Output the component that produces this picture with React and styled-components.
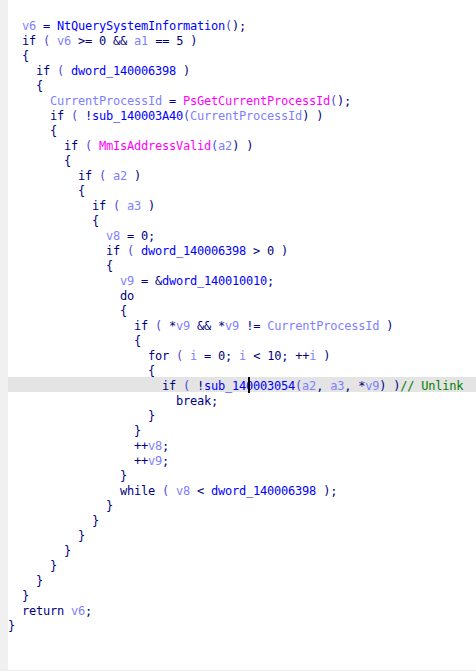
import React from 'react'
import styled, { createGlobalStyle } from 'styled-components'

const CHAR = 7

const LOCALS = new Set(['v6', 'v8', 'v9', 'a1', 'a2', 'a3', 'i', 'CurrentProcessId'])
const IMPORTS = new Set(['PsGetCurrentProcessId', 'MmIsAddressValid'])

const source = [
  '  v6 = NtQuerySystemInformation();',
  '  if ( v6 >= 0 && a1 == 5 )',
  '  {',
  '    if ( dword_140006398 )',
  '    {',
  '      CurrentProcessId = PsGetCurrentProcessId();',
  '      if ( !sub_140003A40(CurrentProcessId) )',
  '      {',
  '        if ( MmIsAddressValid(a2) )',
  '        {',
  '          if ( a2 )',
  '          {',
  '            if ( a3 )',
  '            {',
  '              v8 = 0;',
  '              if ( dword_140006398 > 0 )',
  '              {',
  '                v9 = &dword_140010010;',
  '                do',
  '                {',
  '                  if ( *v9 && *v9 != CurrentProcessId )',
  '                  {',
  '                    for ( i = 0; i < 10; ++i )',
  '                    {',
  '                      if ( !sub_140003054(a2, a3, *v9) )// Unlink',
  '                        break;',
  '                    }',
  '                  }',
  '                  ++v8;',
  '                  ++v9;',
  '                }',
  '                while ( v8 < dword_140006398 );',
  '              }',
  '            }',
  '          }',
  '        }',
  '      }',
  '    }',
  '  }',
  '  return v6;',
  '}',
]

const ACTIVE = 24
const CARET_COL = 34

function tokenize(text) {
  const out = []
  const cut = text.indexOf('//')
  const code = cut >= 0 ? text.slice(0, cut) : text
  code.split(/([A-Za-z_][A-Za-z0-9_]*)/).forEach((p) => {
    if (!p) return
    if (LOCALS.has(p)) out.push({ kind: 'local', text: p })
    else if (IMPORTS.has(p)) out.push({ kind: 'import', text: p })
    else if (/^(dword_|sub_|Nt)/.test(p)) out.push({ kind: 'name', text: p })
    else if (/^[A-Za-z_]/.test(p)) out.push({ kind: 'plain', text: p })
    else {
      // '(' renders in a lighter tone than the rest of the punctuation
      p.split(/(\()/).forEach((q) => {
        if (q) out.push({ kind: q === '(' ? 'paren' : 'plain', text: q })
      })
    }
  })
  if (cut >= 0) out.push({ kind: 'comment', text: text.slice(cut) })
  return out
}

const GlobalStyle = createGlobalStyle`
  html, body {
    margin: 0;
    padding: 0;
    background: #ffffff;
  }
  #root {
    width: 476px;
    height: 671px;
  }
`

const Window = styled.div`
  display: flex;
  width: 476px;
  height: 671px;
  box-sizing: border-box;
  border-bottom: 1px solid #ececec;
  background: #ffffff;
  overflow: hidden;
`

const Gutter = styled.div`
  flex: 0 0 8px;
  background: #f0f0f0;
`

const Editor = styled.div`
  flex: 1;
  overflow: hidden;
  padding-top: 17px;
`

const Listing = styled.div`
  display: flex;
  flex-direction: column;
  font-family: "DejaVu Sans Mono", "Liberation Mono", monospace;
  font-size: 12px;
  letter-spacing: -0.224px;
  color: #000080;
`

const Line = styled.div`
  position: relative;
  height: 15px;
  line-height: 18px;
  white-space: pre;
  background: ${(p) => (p.$active ? '#e4e4e4' : 'transparent')};
`

const COLORS = {
  plain: '#000080',
  paren: '#4b4bd8',
  local: '#8080ff',
  name: '#0000ff',
  import: '#ff00ff',
  comment: '#008000',
}

const Token = styled.span`
  color: ${(p) => COLORS[p.$kind]};
`

const Caret = styled.span`
  position: absolute;
  top: 0;
  left: ${(p) => p.$col * CHAR + 2}px;
  width: 2px;
  height: 16px;
  background: #000000;
`

export default function App() {
  return (
    <>
      <GlobalStyle />
      <Window>
        <Gutter />
        <Editor>
          <Listing>
            {source.map((line, n) => (
              <Line key={n} $active={n === ACTIVE}>
                {tokenize(line).map((t, k) => (
                  <Token key={k} $kind={t.kind}>{t.text}</Token>
                ))}
                {n === ACTIVE && <Caret $col={CARET_COL} />}
              </Line>
            ))}
          </Listing>
        </Editor>
      </Window>
    </>
  )
}
